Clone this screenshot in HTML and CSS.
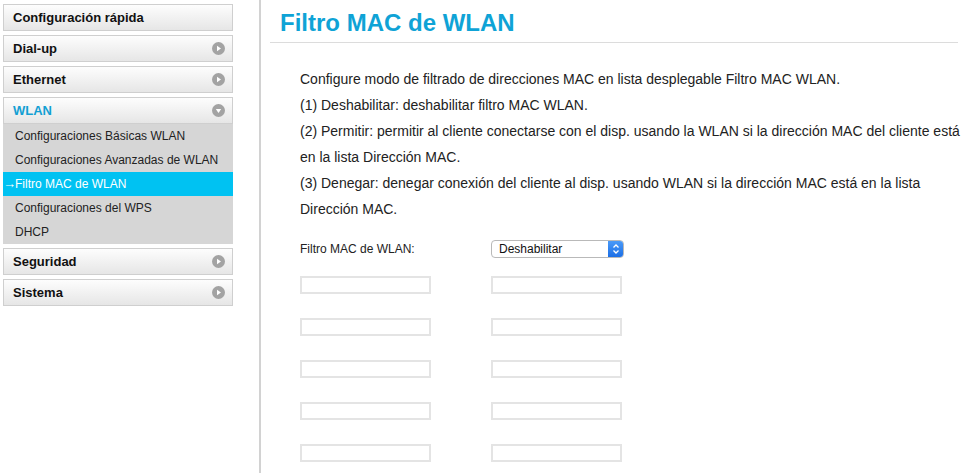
FILE: index.html
```html
<!DOCTYPE html>
<html lang="es">
<head>
<meta charset="utf-8">
<title>Filtro MAC de WLAN</title>
<link rel="stylesheet" href="styles.css">
</head>
<body>
<div class="page">
  <nav class="sidebar">
    <div class="menu-item"><span>Configuración rápida</span></div>
    <div class="menu-item"><span>Dial-up</span><span class="dot"><svg width="13" height="13" viewBox="0 0 13 13"><circle cx="6.5" cy="6.5" r="6.5" fill="#a3a3a3"/><path d="M5 3.8 L9 6.5 L5 9.2 Z" fill="#fff"/></svg></span></div>
    <div class="menu-item"><span>Ethernet</span><span class="dot"><svg width="13" height="13" viewBox="0 0 13 13"><circle cx="6.5" cy="6.5" r="6.5" fill="#a3a3a3"/><path d="M5 3.8 L9 6.5 L5 9.2 Z" fill="#fff"/></svg></span></div>
    <div class="group">
      <div class="menu-item open"><span>WLAN</span><span class="dot"><svg width="13" height="13" viewBox="0 0 13 13"><circle cx="6.5" cy="6.5" r="6.5" fill="#a3a3a3"/><path d="M3.8 5 L9.2 5 L6.5 9 Z" fill="#fff"/></svg></span></div>
      <ul class="submenu">
        <li>Configuraciones Básicas WLAN</li>
        <li>Configuraciones Avanzadas de WLAN</li>
        <li class="active"><span class="arrow">→</span>Filtro MAC de WLAN</li>
        <li>Configuraciones del WPS</li>
        <li>DHCP</li>
      </ul>
    </div>
    <div class="menu-item"><span>Seguridad</span><span class="dot"><svg width="13" height="13" viewBox="0 0 13 13"><circle cx="6.5" cy="6.5" r="6.5" fill="#a3a3a3"/><path d="M5 3.8 L9 6.5 L5 9.2 Z" fill="#fff"/></svg></span></div>
    <div class="menu-item"><span>Sistema</span><span class="dot"><svg width="13" height="13" viewBox="0 0 13 13"><circle cx="6.5" cy="6.5" r="6.5" fill="#a3a3a3"/><path d="M5 3.8 L9 6.5 L5 9.2 Z" fill="#fff"/></svg></span></div>
  </nav>
  <main class="content">
    <h1 class="title">Filtro MAC de WLAN</h1>
    <div class="body">
      <div class="desc">
        <p>Configure modo de filtrado de direcciones MAC en lista desplegable Filtro MAC WLAN.</p>
        <p>(1) Deshabilitar: deshabilitar filtro MAC WLAN.</p>
        <p>(2) Permitir: permitir al cliente conectarse con el disp. usando la WLAN si la dirección MAC del cliente está<br>en la lista Dirección MAC.</p>
        <p>(3) Denegar: denegar conexión del cliente al disp. usando WLAN si la dirección MAC está en la lista<br>Dirección MAC.</p>
      </div>
      <div class="filter-row">
        <div class="label">Filtro MAC de WLAN:</div>
        <div class="select"><span class="select-text">Deshabilitar</span><span class="select-btn"><svg width="8" height="12" viewBox="0 0 8 12"><path d="M1.5 4.5 L4 2 L6.5 4.5 M1.5 7.5 L4 10 L6.5 7.5" fill="none" stroke="#fff" stroke-width="1.3"/></svg></span></div>
      </div>
      <div class="inputs">
        <div class="input"></div><div class="input"></div>
        <div class="input"></div><div class="input"></div>
        <div class="input"></div><div class="input"></div>
        <div class="input"></div><div class="input"></div>
        <div class="input"></div><div class="input"></div>
      </div>
    </div>
  </main>
</div>
</body>
</html>
```
FILE: styles.css
```css
* { box-sizing: border-box; }
html, body { margin: 0; padding: 0; background: #fff; }
body { font-family: "Liberation Sans", Arial, Helvetica, sans-serif; color: #222; height: 473px; overflow: hidden; }
.page { display: flex; height: 473px; }
.sidebar { width: 259px; flex: none; padding: 4px 0 0 3px; display: flex; flex-direction: column; gap: 4px; }
.menu-item {
  width: 230px; height: 27px; border: 1px solid #cfcfcf;
  background: linear-gradient(#fdfdfd, #e6e6e6);
  display: flex; align-items: center; justify-content: space-between;
  padding: 0 7px 0 9px; font-weight: bold; font-size: 13px; color: #111;
}
.dot { display: flex; }
.menu-item.open { color: #129fd3; }
.group { display: flex; flex-direction: column; }
.submenu { list-style: none; margin: 0; padding: 0; width: 230px; background: #d6d6d6; }
.submenu li { height: 24px; line-height: 24px; font-size: 12px; color: #222; padding-left: 12px; position: relative; }
.submenu li.active { background: #00c2f2; color: #fff; }
.arrow { position: absolute; left: 0; top: 0; font-size: 13px; }
.content { flex: 1; min-width: 0; border-left: 2px solid #d2d2d2; padding: 0 6px 0 9px; overflow: hidden; }
.title {
  margin: 0; padding: 9px 0 5px 10px; font-size: 24px; line-height: 28px;
  font-weight: bold; color: #0fa3d6; border-bottom: 1px solid #dcdcdc;
}
.body { padding: 23px 0 0 30px; }
.desc p { margin: 0; font-size: 14px; line-height: 26px; color: #222; white-space: nowrap; }
.filter-row { display: grid; grid-template-columns: 191px 133px; height: 18px; margin-top: 18px; }
.label { font-size: 12px; line-height: 18px; color: #222; }
.select {
  display: flex; align-items: stretch; height: 18px; border: 1px solid #b9b9b9; border-radius: 4px;
  background: #fff; overflow: hidden;
}
.select-text { flex: 1; font-size: 12px; line-height: 16px; padding-left: 7px; color: #111; }
.select-btn { width: 15px; background: linear-gradient(#4a9af8, #1c6fe6); display: flex; align-items: center; justify-content: center; }
.inputs { display: grid; grid-template-columns: 191px 131px; grid-auto-rows: 18px; row-gap: 24px; margin-top: 18px; }
.input { width: 131px; height: 18px; border: 2px solid #e4e4e4; background: #fff; }
```
